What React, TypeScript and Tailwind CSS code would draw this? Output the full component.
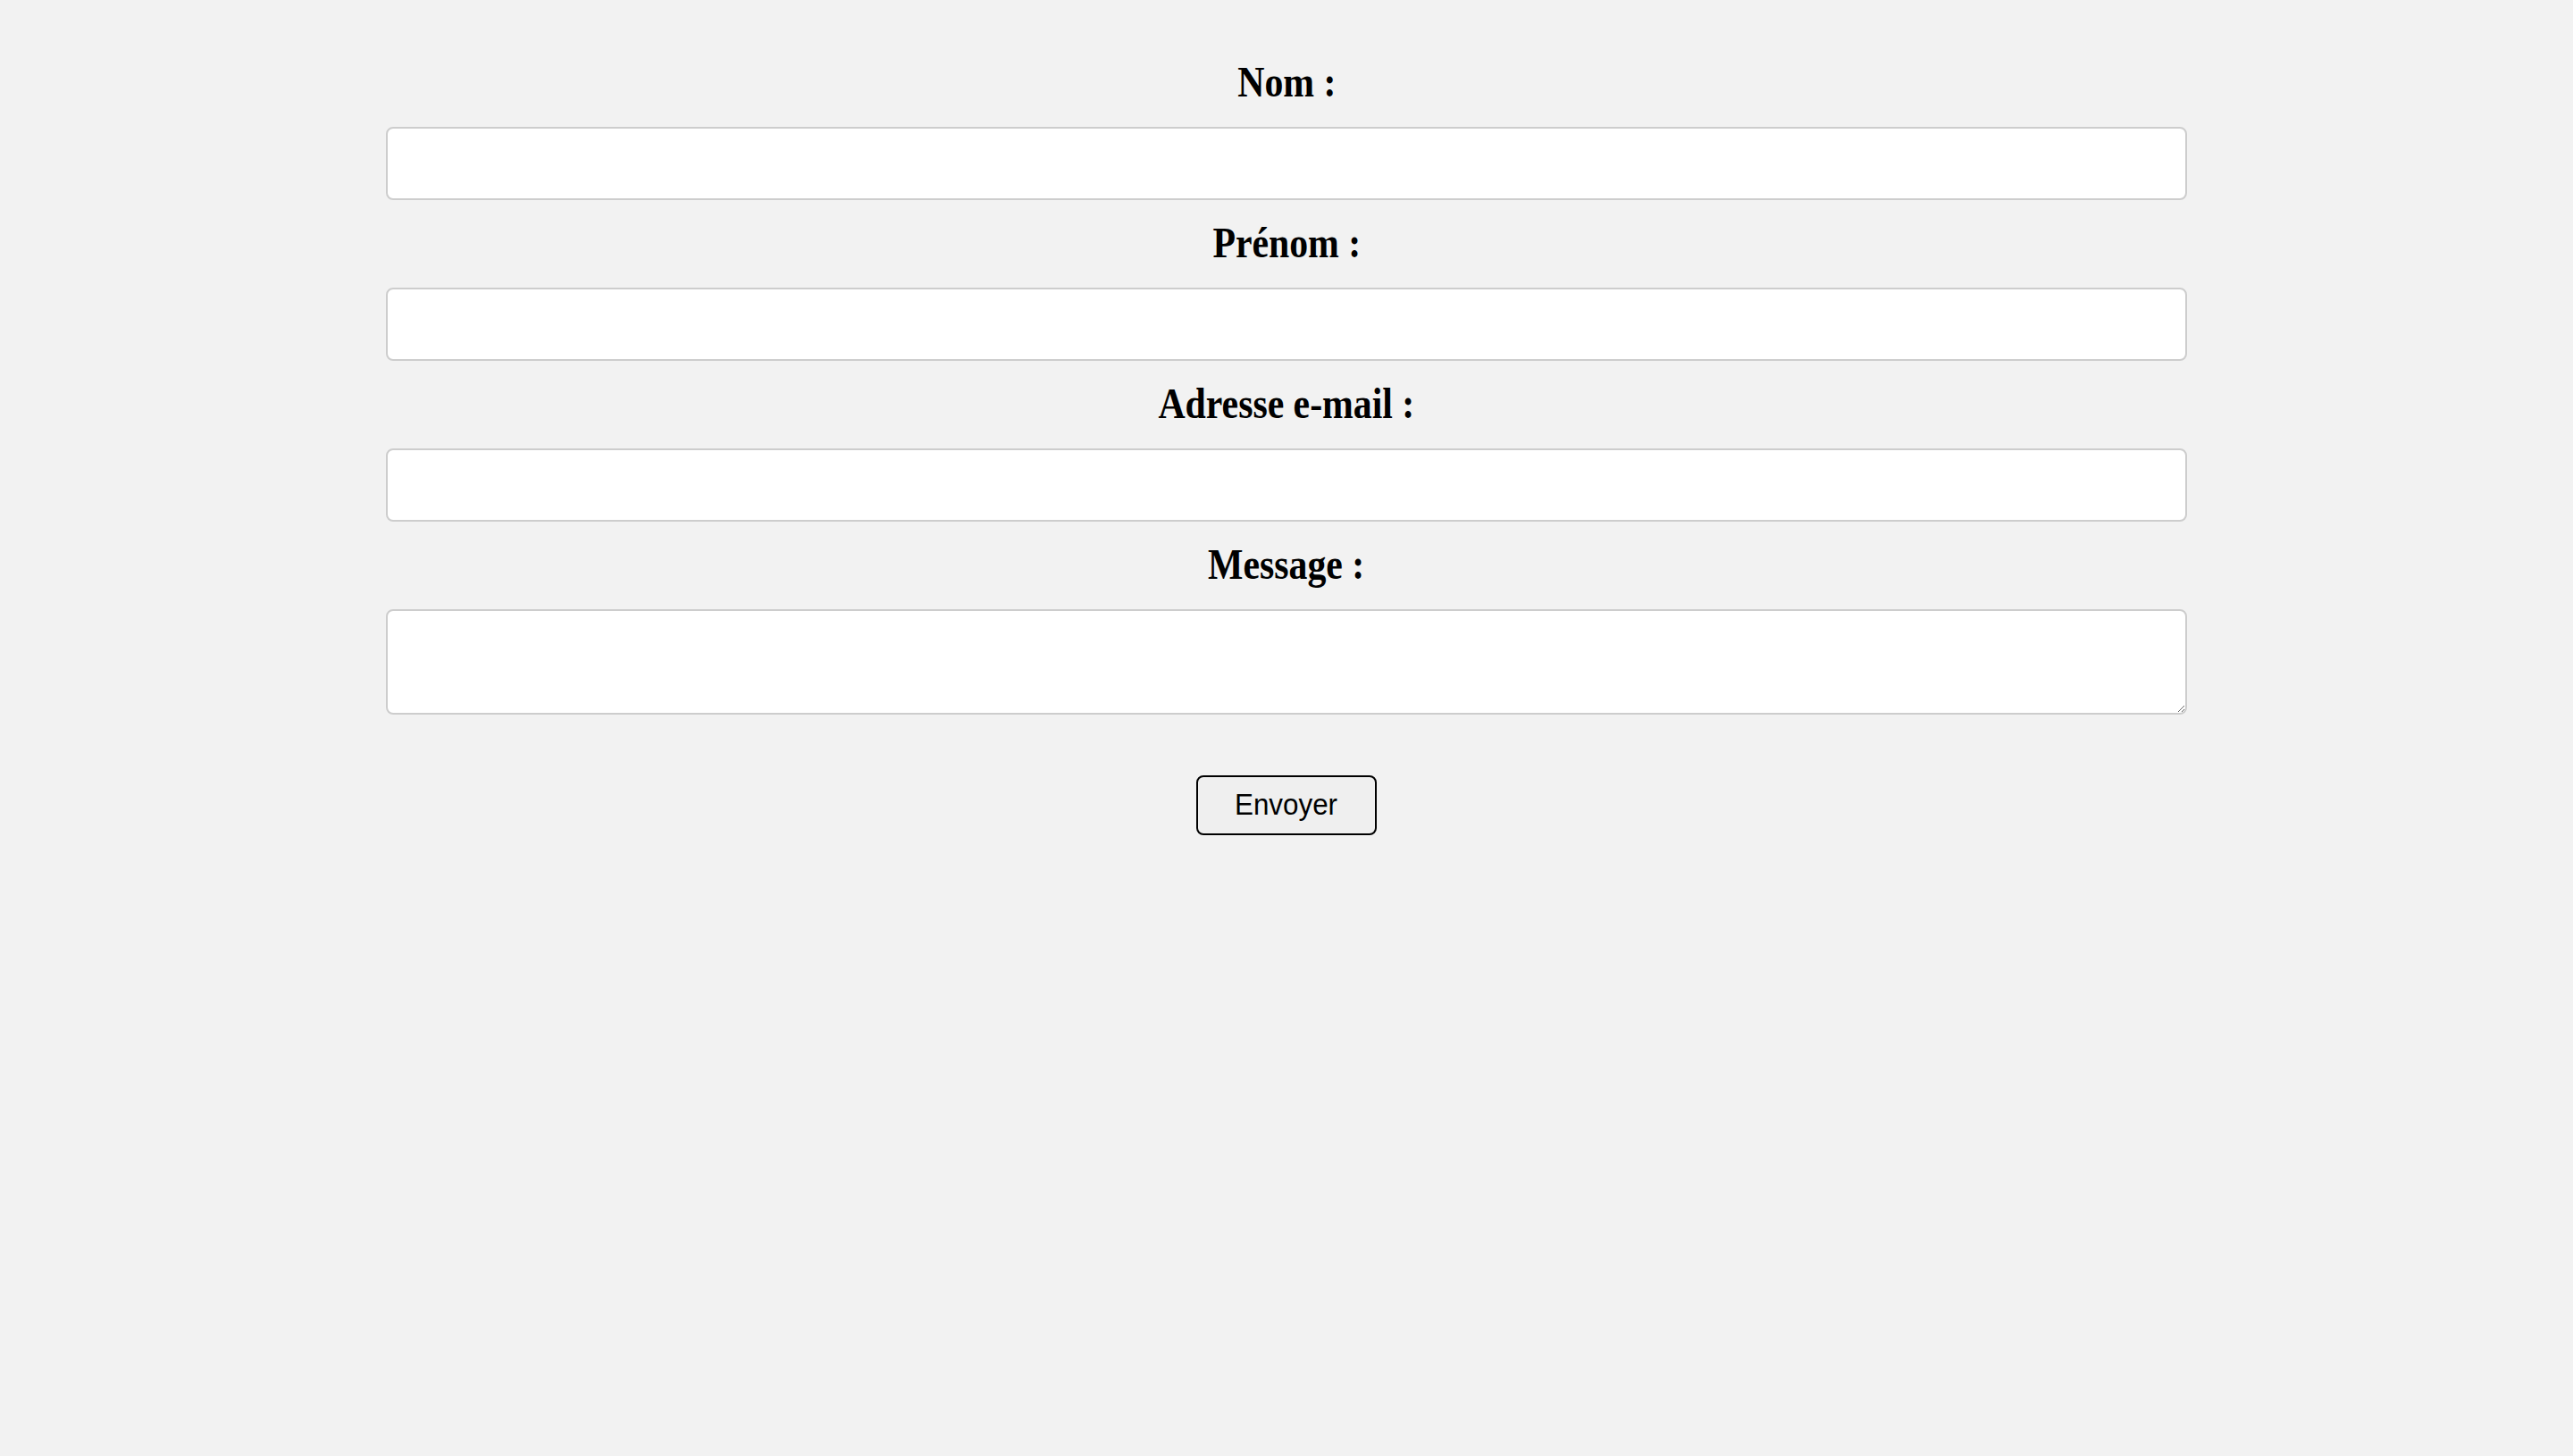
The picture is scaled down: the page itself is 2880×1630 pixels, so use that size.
export default function App() {
    const fields = [
        { id: "nom", label: "Nom :", type: "text" },
        { id: "prenom", label: "Prénom :", type: "text" },
        { id: "email", label: "Adresse e-mail :", type: "email" },
    ];

    return (
        <div className="h-[1630px] w-full bg-[#f2f2f2] pt-[64px]">
            <form className="mx-auto flex w-[2016px] flex-col" onSubmit={(e) => e.preventDefault()}>
                {fields.map((f) => (
                    <div key={f.id} className="flex flex-col pb-[20px]">
                        <label
                            htmlFor={f.id}
                            className="block h-[56px] text-center text-[48px] leading-[56px] font-bold text-black [font-family:'Liberation_Serif','Times_New_Roman',serif]"
                        >
                            <span className="inline-block scale-x-[0.87]">{f.label}</span>
                        </label>
                        <input
                            id={f.id}
                            type={f.type}
                            className="mt-[22px] h-[82px] w-full rounded-lg border-2 border-[#cdcdcd] bg-white px-4 text-[32px] outline-none"
                        />
                    </div>
                ))}

                {/* Message */}
                <div className="flex flex-col">
                    <label
                        htmlFor="message"
                        className="block h-[56px] text-center text-[48px] leading-[56px] font-bold text-black [font-family:'Liberation_Serif','Times_New_Roman',serif]"
                    >
                        <span className="inline-block scale-x-[0.87]">Message :</span>
                    </label>
                    <textarea
                        id="message"
                        className="mt-[22px] block h-[118px] w-full rounded-lg border-2 border-[#cdcdcd] bg-white px-4 py-2 text-[32px] outline-none"
                    />
                </div>

                <div className="mt-[68px] flex justify-center">
                    <button
                        type="submit"
                        className="h-[67px] w-[202px] rounded-lg border-2 border-black bg-[#efefef] pb-[2px] text-[33px] leading-none text-black [font-family:'Liberation_Sans',Arial,sans-serif]"
                    >
                        <span className="inline-block scale-x-[0.95]">Envoyer</span>
                    </button>
                </div>
            </form>
        </div>
    );
}
